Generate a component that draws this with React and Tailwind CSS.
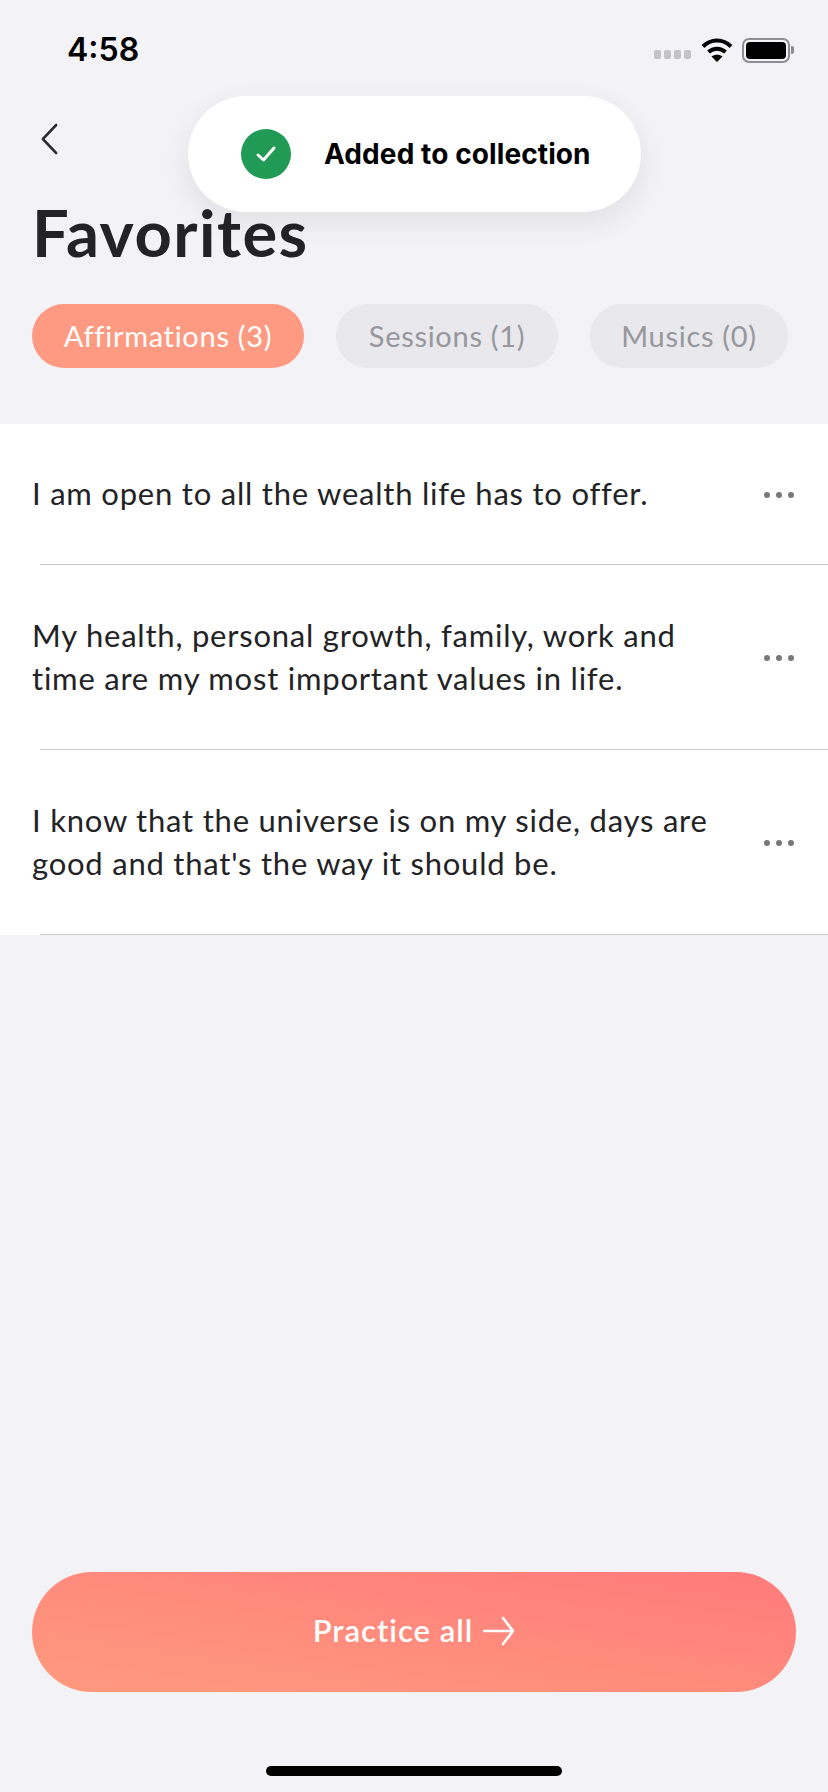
import { useState } from 'react';

const tabs = [
    { label: 'Affirmations (3)', active: true, width: 'w-[272px]' },
    { label: 'Sessions (1)', active: false, width: 'w-[222px]' },
    { label: 'Musics (0)', active: false, width: 'w-[198px]' },
];

const items = [
    { lines: ['I am open to all the wealth life has to offer.'], height: 'h-[141px]' },
    { lines: ['My health, personal growth, family, work and', 'time are my most important values in life.'], height: 'h-[185px]' },
    { lines: ["I know that the universe is on my side, days are", "good and that's the way it should be."], height: 'h-[185px]' },
];

function StatusBar() {
    return (
        <div className="flex h-[100px] items-start justify-between pl-[67px] pr-[34px] pt-[29px]">
            <span className="font-['Inter',sans-serif] text-[32px] leading-[42px] font-semibold text-black">4:58</span>
            <div className="flex items-center pt-[8px]">
                <div className="mr-[10px] mt-[8px] flex gap-[3px]">
                    {[0, 1, 2, 3].map(i => (
                        <span key={i} className="h-[9px] w-[7px] rounded-[2px] bg-[#c4c4c8]" />
                    ))}
                </div>
                <svg width="32" height="26" viewBox="0 0 32 26" className="mr-[9px]">
                    <path d="M2 9.5 C10 1.5 22 1.5 30 9.5" fill="none" stroke="#000" strokeWidth="4" />
                    <path d="M7.5 15 C12.5 10.5 19.5 10.5 24.5 15" fill="none" stroke="#000" strokeWidth="4" />
                    <path d="M16 25 L10.5 19.5 C13.5 17 18.5 17 21.5 19.5 Z" fill="#000" />
                </svg>
                <div className="flex items-center">
                    <div className="h-[25px] w-[48px] rounded-[7px] border-2 border-[#8e8e92] p-[2px]">
                        <div className="h-full w-full rounded-[4px] bg-black" />
                    </div>
                    <span className="ml-[1px] h-[8px] w-[3px] rounded-r-[2px] bg-[#8e8e92]" />
                </div>
            </div>
        </div>
    );
}

export default function App() {
    const [activeTab] = useState(0);

    return (
        <div className="relative flex h-[1792px] w-[828px] flex-col overflow-hidden bg-[#f2f2f7] font-['Lato',sans-serif]">
            <StatusBar />

            <div className="flex h-[78px] items-center pl-[41px]">
                <svg width="20" height="32" viewBox="0 0 20 32" fill="none">
                    <path d="M17 2 L3 16 L17 30" stroke="#2a2a2e" strokeWidth="2.6" strokeLinecap="round" strokeLinejoin="round" transform="translate(-1 0) scale(0.95 1)" />
                </svg>
            </div>

            <h1 className="ml-[32px] mt-[15px] h-[78px] text-[65px] leading-[78px] font-bold tracking-[1.5px] text-[#232326]">Favorites</h1>

            <div className="mt-[33px] flex gap-[32px] pl-[32px]">
                {tabs.map((tab, i) => (
                    <div
                        key={tab.label}
                        className={`flex h-[64px] items-center justify-center rounded-full text-[29px] tracking-[0.7px] ${tab.width} ${i === activeTab ? 'bg-[#ff9a82] text-white' : 'bg-[#e8e8ed] text-[#97979c]'}`}
                    >
                        {tab.label}
                    </div>
                ))}
            </div>

            <div className="mt-[56px] bg-white">
                {items.map((item, i) => (
                    <div key={i} className={`relative flex items-center justify-between pl-[32px] pr-[34px] ${item.height}`}>
                        <p className="pb-[2px] text-[31px] leading-[43px] tracking-[0.78px] text-[#232326]">
                            {item.lines.map(line => (
                                <span key={line} className="block whitespace-nowrap">{line}</span>
                            ))}
                        </p>
                        <div className="flex gap-[6px]">
                            <span className="h-[6px] w-[6px] rounded-full bg-[#77777c]" />
                            <span className="h-[6px] w-[6px] rounded-full bg-[#77777c]" />
                            <span className="h-[6px] w-[6px] rounded-full bg-[#77777c]" />
                        </div>
                        <div className="absolute bottom-0 left-[40px] right-0 h-px bg-[#c8c8cc]" />
                    </div>
                ))}
            </div>

            <div className="mt-auto mb-[100px] px-[32px]">
                <button className="flex h-[120px] w-full items-center justify-center gap-[10px] rounded-full bg-linear-to-tr from-[#ff9a7e] to-[#ff7a7b] pb-[3px] text-[31px] font-semibold tracking-[1px] text-white">
                    Practice all
                    <svg width="32" height="30" viewBox="0 0 32 30" fill="none">
                        <path d="M1 15 H30 M20 2 L30 15 L20 28" stroke="#fff" strokeWidth="2.6" strokeLinecap="round" strokeLinejoin="round" />
                    </svg>
                </button>
            </div>

            <div className="absolute bottom-[16px] left-[266px] h-[10px] w-[296px] rounded-full bg-black" />

            <div className="absolute left-[188px] top-[96px] flex h-[116px] w-[453px] items-center rounded-full bg-white pl-[53px] shadow-[0_10px_30px_rgba(0,0,0,0.08)]">
                <div className="flex h-[50px] w-[50px] items-center justify-center rounded-full bg-[#219a56]">
                    <svg width="22" height="18" viewBox="0 0 22 18" fill="none">
                        <path d="M3 10 L8.5 15 L19 3" stroke="#fff" strokeWidth="3" strokeLinecap="round" strokeLinejoin="round" />
                    </svg>
                </div>
                <span className="ml-[33px] font-['Inter',sans-serif] text-[28px] tracking-[0.1px] font-bold whitespace-nowrap text-black">Added to collection</span>
            </div>
        </div>
    );
}
